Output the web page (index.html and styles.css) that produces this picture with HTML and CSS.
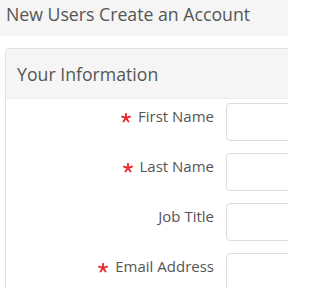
FILE: index.html
```html
<!DOCTYPE html>
<html>
<head>
<meta charset="utf-8">
<link rel="stylesheet" href="styles.css">
</head>
<body>
<div class="page">
<div class="page-title">New Users Create an Account</div>
<div class="panel">
  <div class="panel-heading">Your Information</div>
  <div class="panel-body">
    <div class="row">
      <label class="label"><svg class="req" viewBox="0 0 10 10"><g stroke="#e8282b" stroke-width="1.9" stroke-linecap="round"><line x1="5" y1="0.9" x2="5" y2="5"/><line x1="5" y1="5" x2="9" y2="3.7"/><line x1="5" y1="5" x2="1" y2="3.7"/><line x1="5" y1="5" x2="7.5" y2="8.5"/><line x1="5" y1="5" x2="2.5" y2="8.5"/></g></svg>First Name</label>
      <div class="input"></div>
    </div>
    <div class="row">
      <label class="label"><svg class="req" viewBox="0 0 10 10"><g stroke="#e8282b" stroke-width="1.9" stroke-linecap="round"><line x1="5" y1="0.9" x2="5" y2="5"/><line x1="5" y1="5" x2="9" y2="3.7"/><line x1="5" y1="5" x2="1" y2="3.7"/><line x1="5" y1="5" x2="7.5" y2="8.5"/><line x1="5" y1="5" x2="2.5" y2="8.5"/></g></svg>Last Name</label>
      <div class="input"></div>
    </div>
    <div class="row">
      <label class="label">Job Title</label>
      <div class="input"></div>
    </div>
    <div class="row">
      <label class="label"><svg class="req" viewBox="0 0 10 10"><g stroke="#e8282b" stroke-width="1.9" stroke-linecap="round"><line x1="5" y1="0.9" x2="5" y2="5"/><line x1="5" y1="5" x2="9" y2="3.7"/><line x1="5" y1="5" x2="1" y2="3.7"/><line x1="5" y1="5" x2="7.5" y2="8.5"/><line x1="5" y1="5" x2="2.5" y2="8.5"/></g></svg>Email Address</label>
      <div class="input"></div>
    </div>
  </div>
</div>
</div>
</body>
</html>
```
FILE: styles.css
```css
html, body {
  margin: 0;
  padding: 0;
  background: #fff;
}
body {
  font-family: "Open Sans", "Liberation Sans", sans-serif;
  color: #555;
}
.page {
  width: 288px;
  height: 288px;
  overflow: hidden;
}
.page-title {
  height: 36px;
  background: #f5f5f5;
  font-size: 17.7px;
  line-height: 29px;
  padding-left: 6px;
  white-space: nowrap;
}
.panel {
  margin: 12px 0 0 5px;
  width: 320px;
  border: 1px solid #e2e2e2;
  border-radius: 4px;
  overflow: hidden;
}
.panel-heading {
  height: 50px;
  background: #f5f5f5;
  border-bottom: 1px solid #ececec;
  box-sizing: border-box;
  padding-left: 11px;
  font-size: 17.7px;
  line-height: 50px;
  white-space: nowrap;
}
.panel-body {
  padding-top: 4px;
}
.row {
  display: flex;
  align-items: flex-start;
  height: 50px;
}
.label {
  flex: 0 0 210px;
  box-sizing: border-box;
  text-align: right;
  font-size: 15px;
  line-height: 20px;
  padding-top: 3px;
  padding-right: 2px;
  white-space: nowrap;
}
.req {
  width: 10px;
  height: 10px;
  margin-right: 7px;
  vertical-align: -1px;
}
.input {
  flex: 0 0 120px;
  margin-left: 10px;
  height: 38px;
  box-sizing: border-box;
  border: 1px solid #dcdcdc;
  border-radius: 4px;
  background: #fff;
}
```
